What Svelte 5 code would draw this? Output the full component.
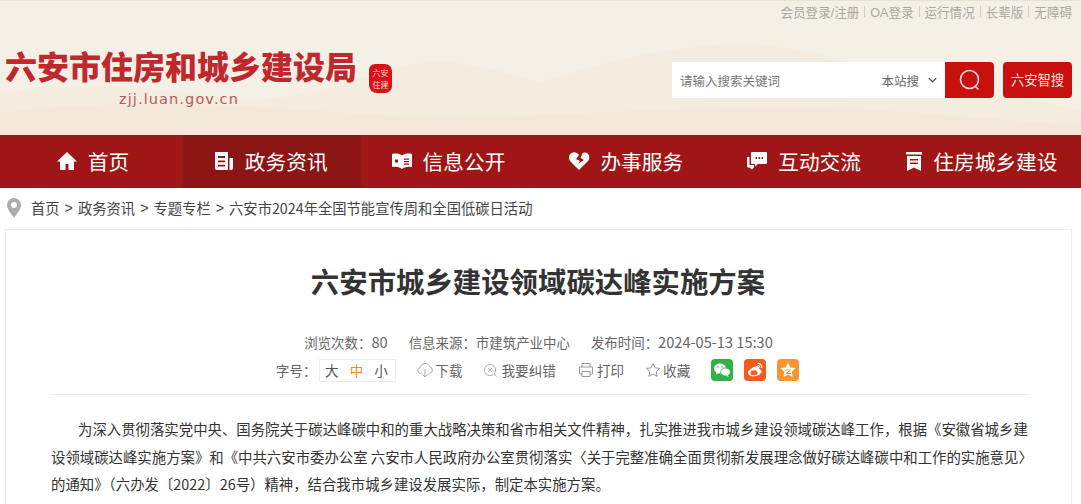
<script>
  const navItems = [
    { label: '首页', icon: 'home' },
    { label: '政务资讯', icon: 'doc', active: true },
    { label: '信息公开', icon: 'book' },
    { label: '办事服务', icon: 'heart' },
    { label: '互动交流', icon: 'chat' },
    { label: '住房城乡建设', icon: 'flag' }
  ];
  const topLinks = ['会员登录/注册', 'OA登录', '运行情况', '长辈版', '无障碍'];
  const crumbs = ['首页', '政务资讯', '专题专栏', '六安市2024年全国节能宣传周和全国低碳日活动'];
</script>

<div class="page">
  <header class="header">
    <svg class="hills" viewBox="0 0 1081 134" preserveAspectRatio="none" aria-hidden="true">
      <path d="M0 92C70 80 130 84 210 96C280 106 340 84 400 66C440 56 480 62 540 82C600 62 680 40 760 44C840 50 900 84 1000 94C1040 98 1060 106 1081 110V134H0Z" fill="#f4ecdf" />
      <path d="M0 112C120 96 240 104 380 114C520 122 700 100 860 108C960 114 1030 122 1081 124V134H0Z" fill="#f3e8da" />
    </svg>
    <div class="brand">
      <div class="logo-name">六安市住房和城乡建设局</div>
      <div class="logo-url">zjj.luan.gov.cn</div>
    </div>
    <div class="seal"><span>六安</span><span>住建</span></div>
    <div class="header-right">
      <div class="top-links">
        {#each topLinks as link, i}
          {#if i > 0}<i class="sep"></i>{/if}
          <span>{link}</span>
        {/each}
      </div>
      <div class="search-row">
        <div class="search">
          <span class="placeholder">请输入搜索关键词</span>
          <span class="scope">本站搜</span>
          <svg class="caret" viewBox="0 0 10 6"><path d="M1 1l4 4 4-4" fill="none" stroke="#555" stroke-width="1.4" /></svg>
          <div class="search-btn">
            <svg viewBox="0 0 24 24" width="24" height="24"><circle cx="11.5" cy="11.5" r="9" fill="none" stroke="#f6d9d6" stroke-width="1.6" /><path d="M17 18l3.5 3.5" stroke="#f6d9d6" stroke-width="1.6" /></svg>
          </div>
        </div>
        <div class="smart">六安智搜</div>
      </div>
    </div>
  </header>

  <nav class="nav">
    {#each navItems as item}
      <div class="nav-item" class:active={item.active}>
        <svg class="nav-icon" viewBox="0 0 22 22" aria-hidden="true">
          {#if item.icon === 'home'}
            <path d="M11 2L1 11.500h3V20h5.500v-6h3v6H18v-8.500h3z" fill="#fff" />
          {:else if item.icon === 'doc'}
            <path d="M2 2h13v18H4a2 2 0 0 1-2-2zM5 6v2h7V6zM5 10.500v1.800h7v-1.800zM5 14.800v1.800h7v-1.800zM16.500 8H20v10a2 2 0 0 1-2 2h-1.500z" fill="#fff" fill-rule="evenodd" />
          {:else if item.icon === 'book'}
            <path d="M1 4c4-1 7-.5 10 1.500C14 3.500 17 3 21 4v13c-4-.8-7-.3-10 2-3-2.300-6-2.800-10-2zM4 9.500v3h3v-3zM13 8.500v1.300h5V8.500zM13 11v1.300h5V11zM13 13.500v1.300h5v-1.300z" fill="#fff" fill-rule="evenodd" />
          {:else if item.icon === 'heart'}
            <path d="M11 20L2.500 11.500C0 8.500.8 4.500 3.500 3c3-1.500 5.500-.5 7.500 2l-3 4 4 2-2 3 6-4-3.500-2L14.500 3c3-1.200 5.500-.3 6.500 2.500.8 2.300.2 4.300-1.500 6z" fill="#fff" />
          {:else if item.icon === 'chat'}
            <path d="M6 2h14a1 1 0 0 1 1 1v10a1 1 0 0 1-1 1h-8l-3 2.500V14H6a1 1 0 0 1-1-1V3a1 1 0 0 1 1-1zM9.500 7v2h1.500V7zM12.500 7v2H14V7zM15.500 7v2H17V7zM1 7h2.500v8H8v2.500l-2 2-2.500-2H2a1 1 0 0 1-1-1z" fill="#fff" fill-rule="evenodd" />
          {:else}
            <path d="M3 2h16v2.500H3zM4 6h14v15l-7-3.500L4 21zM7 9v1.600h8V9zM7 12.500v1.600h8v-1.600z" fill="#fff" fill-rule="evenodd" />
          {/if}
        </svg>
        <span>{item.label}</span>
      </div>
    {/each}
  </nav>

  <div class="crumbs">
    <svg class="pin" viewBox="0 0 14 20" aria-hidden="true">
      <path d="M7 0a7 7 0 0 0-7 7c0 4.500 5 9.500 7 13 2-3.500 7-8.500 7-13a7 7 0 0 0-7-7z" fill="#adadad" /><circle cx="7" cy="7" r="3" fill="#fff" />
    </svg>
    {#each crumbs as crumb, i}
      {#if i > 0}<span class="gt">&gt;</span>{/if}
      <span>{crumb}</span>
    {/each}
  </div>

  <main class="card">
    <h1>六安市城乡建设领域碳达峰实施方案</h1>
    <div class="meta">
      <span>浏览次数：<b>80</b></span>
      <span>信息来源：市建筑产业中心</span>
      <span>发布时间：<b>2024-05-13 15:30</b></span>
    </div>
    <div class="tools">
      <span class="size-label">字号：</span>
      <div class="sizes"><span>大</span><span class="on">中</span><span>小</span></div>
      <span class="tool down">
        <svg viewBox="0 0 16 16" width="16" height="16"><path d="M4.500 11.500H3.500a3 3 0 0 1-.4-5.900A5 5 0 0 1 12.800 5a3.300 3.300 0 0 1-.3 6.500h-1M8 7v7.500M5.500 12.500L8 15l2.500-2.500" fill="none" stroke="#aaa" /></svg>
        下载
      </span>
      <span class="tool fix">
        <svg viewBox="0 0 16 16" width="15" height="15"><circle cx="7.500" cy="7.500" r="6" fill="none" stroke="#aaa" /><path d="M5 5l5 5M10 5l-5 5M12 12l2.500 2.500" stroke="#aaa" fill="none" /></svg>
        我要纠错
      </span>
      <span class="tool print">
        <svg viewBox="0 0 16 16" width="16" height="16"><path d="M4 5V1.500h8V5M4 12H1.500V5h13v7H12M4 9.500h8v5H4z" fill="none" stroke="#999" /></svg>
        打印
      </span>
      <span class="tool fav">
        <svg viewBox="0 0 16 16" width="16" height="16"><path d="M8 1.500l2 4.300 4.600.6-3.400 3.200.9 4.700L8 12l-4.100 2.300.9-4.700L1.400 6.400 6 5.800z" fill="none" stroke="#999" /></svg>
        收藏
      </span>
      <div class="share">
        <span class="badge wechat">
          <svg viewBox="0 0 22 22" width="22" height="22"><ellipse cx="9" cy="9.500" rx="6" ry="5" fill="#fff" /><path d="M5.500 13l-.7 2.500 3-1.500z" fill="#fff" /><ellipse cx="14.500" cy="13" rx="4.800" ry="4" fill="#fff" stroke="#2fb344" stroke-width=".8" /><path d="M17 16l.7 2-2.500-1.200z" fill="#fff" /><circle cx="7" cy="8" r=".8" fill="#2fb344" /><circle cx="11" cy="8" r=".8" fill="#2fb344" /></svg>
        </span>
        <span class="badge weibo">
          <svg viewBox="0 0 22 22" width="22" height="22"><path d="M9 8.500c3-2 5.500-2 6 0 .3 1-.1 1.500.8 1.700 2 .6 2.400 2.300 1.200 3.900-1.500 2.300-5 3.400-7.800 3.200C6 17 3.800 15.500 4 13.200 4.200 11.500 6.500 10 9 8.500z" fill="#fff" /><ellipse cx="10" cy="13.700" rx="3.500" ry="2.500" fill="#f55a1e" /><path d="M13.500 4.500c2.500-.5 5 1.700 4.300 4.600M13.800 6.600c1.300-.2 2.300.9 2 2.100" fill="none" stroke="#fff" stroke-width="1.100" /></svg>
        </span>
        <span class="badge star">
          <svg viewBox="0 0 22 22" width="22" height="22"><path d="M11 3.500l2.300 4.900 5.300.7-3.900 3.700 1 5.300L11 15.500l-4.700 2.600 1-5.300-3.900-3.700 5.300-.7z" fill="#fff" /><path d="M8.500 11h5l-4.500 3.500h5" fill="none" stroke="#f8962e" /></svg>
        </span>
      </div>
    </div>
    <div class="article">
      <p>为深入贯彻落实党中央、国务院关于碳达峰碳中和的重大战略决策和省市相关文件精神，扎实推进我市城乡建设领域碳达峰工作，根据《安徽省城乡建设领域碳达峰实施方案》和《中共六安市委办公室 六安市人民政府办公室贯彻落实〈关于完整准确全面贯彻新发展理念做好碳达峰碳中和工作的实施意见〉的通知》（六办发〔2022〕26号）精神，结合我市城乡建设发展实际，制定本实施方案。</p>
    </div>
  </main>
</div>

<style>
  :global(body) {
    margin: 0;
    background: #fff;
    overflow: hidden;
  }

  .page {
    width: 1081px;
    height: 504px;
    overflow: hidden;
    font-family: "Noto Sans CJK SC", "Liberation Sans", sans-serif;
    color: #333;
  }

  .header {
    position: relative;
    display: flex;
    height: 135px;
    box-sizing: border-box;
    border-top: 1px solid #e6e3de;
    background: #f5f0e6;
    overflow: hidden;
  }

  .hills {
    position: absolute;
    inset: 0;
    width: 100%;
    height: 100%;
  }

  .brand {
    position: relative;
    width: 351px;
    padding: 44px 0 0 5px;
  }

  .logo-name {
    font-size: 32px;
    line-height: 40px;
    font-weight: 900;
    color: #c0282d;
    white-space: nowrap;
  }

  .logo-url {
    margin: 4px 0 0 114px;
    font-family: "DejaVu Sans", sans-serif;
    font-size: 14.5px;
    line-height: 20px;
    letter-spacing: 1.1px;
    color: #b9585c;
    white-space: nowrap;
  }

  .seal {
    position: relative;
    display: flex;
    flex-direction: column;
    justify-content: center;
    align-items: center;
    width: 23px;
    height: 29px;
    margin: 63px 0 0 13px;
    border-radius: 6px 7px 7px 8px;
    background: #dc1018;
    color: #f8d6d0;
    font-size: 8px;
    line-height: 12px;
  }

  .header-right {
    position: relative;
    display: flex;
    flex: 1;
    flex-direction: column;
    align-items: flex-end;
    padding-right: 9px;
  }

  .top-links {
    display: flex;
    align-items: center;
    height: 18px;
    margin-top: 1px;
    font-family: "Liberation Sans", "Noto Sans CJK SC", sans-serif;
    font-size: 12.55px;
    color: #aaa69f;
  }

  .sep {
    width: 1px;
    height: 11px;
    margin: 0 5px;
    background: #cfcac2;
  }

  .search-row {
    display: flex;
    margin-top: 42px;
  }

  .search {
    display: flex;
    align-items: center;
    width: 322px;
    height: 36px;
    background: #fff;
  }

  .placeholder {
    flex: 1;
    padding-left: 8px;
    font-size: 12.5px;
    color: #777;
  }

  .scope {
    font-size: 12.5px;
    color: #666;
  }

  .caret {
    width: 9px;
    height: 6px;
    margin: 0 8px 0 9px;
  }

  .search-btn {
    display: flex;
    align-items: center;
    justify-content: center;
    width: 49px;
    height: 36px;
    border-radius: 0 4px 4px 0;
    background: #c8100f;
  }

  .smart {
    width: 69px;
    height: 36px;
    margin-left: 9px;
    border-radius: 4px;
    background: #c8100f;
    color: #fbe4df;
    font-size: 13.3px;
    line-height: 36px;
    text-align: center;
  }

  .nav {
    display: grid;
    grid-template-columns: repeat(6, 177.8px);
    height: 53px;
    padding-left: 5px;
    background: #a01616;
  }

  .nav-item {
    display: flex;
    align-items: center;
    justify-content: center;
    gap: 10px;
    box-sizing: border-box;
    padding: 0 3px 2px 0;
    color: #fff;
    font-size: 20.7px;
    white-space: nowrap;
  }

  .nav-item:last-child {
    gap: 8px;
    padding-right: 5px;
  }

  .nav-item.active {
    background: #8c1515;
  }

  .nav-icon {
    width: 22px;
    height: 22px;
    flex: none;
  }

  .crumbs {
    display: flex;
    align-items: center;
    gap: 5px;
    height: 41px;
    padding: 0 0 2px 7px;
    box-sizing: border-box;
    font-size: 14.3px;
    color: #444;
  }

  .pin {
    width: 14px;
    height: 20px;
    margin-right: 5px;
  }

  .gt {
    font-family: "Liberation Sans", sans-serif;
  }

  .card {
    box-sizing: border-box;
    width: 1067px;
    height: 300px;
    margin-left: 5px;
    padding: 0 41px 0 45px;
    border: 1px solid #eee;
    border-bottom: none;
  }

  h1 {
    margin: 30px 0 0;
    padding-right: 5px;
    font-size: 28.4px;
    line-height: 42px;
    font-weight: 700;
    color: #333;
    text-align: center;
  }

  .meta {
    display: flex;
    justify-content: center;
    gap: 21px;
    margin-top: 28px;
    padding-right: 4px;
    font-size: 13.45px;
    line-height: 24px;
    color: #666;
  }

  .meta b {
    font-size: 14.6px;
    font-weight: 400;
  }

  .tools {
    display: flex;
    align-items: center;
    justify-content: center;
    height: 30px;
    margin-top: 1px;
    padding: 0 6px 9px 0;
    border-bottom: 1px solid #eee;
    font-size: 13.6px;
    color: #666;
  }

  .sizes {
    display: flex;
    margin-left: 2px;
    padding-right: 2px;
    border: 1px solid #eee;
  }

  .sizes span {
    width: 24.6px;
    height: 21px;
    line-height: 21px;
    text-align: center;
    color: #555;
  }

  .sizes .on {
    color: #f08c1e;
  }

  .tool {
    display: flex;
    align-items: center;
    gap: 2px;
  }

  .tool svg {
    flex: none;
  }

  .down {
    margin-left: 21px;
  }

  .fix {
    gap: 4px;
    margin-left: 20px;
  }

  .print {
    gap: 3px;
    margin-left: 22px;
  }

  .fav {
    margin-left: 21px;
  }

  .share {
    display: flex;
    gap: 11px;
    margin-left: 21px;
  }

  .badge {
    display: block;
    width: 22px;
    height: 22px;
    border-radius: 4px;
  }

  .badge svg {
    display: block;
  }

  .wechat {
    background: #2fb344;
  }

  .weibo {
    background: #f55a1e;
  }

  .star {
    background: #f8962e;
  }

  .article {
    padding-top: 20px;
  }

  .article p {
    margin: 0;
    font-size: 14.4px;
    line-height: 27.5px;
    text-indent: 27px;
    color: #333;
  }
</style>
